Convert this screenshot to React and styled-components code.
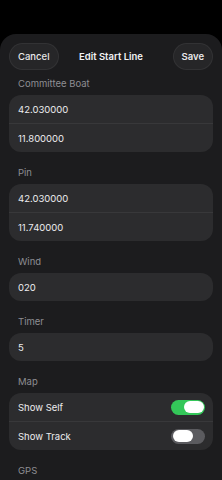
import styled, { createGlobalStyle } from "styled-components";

const Global = createGlobalStyle`
  html, body {
    margin: 0;
    padding: 0;
    background: #000;
  }
  body {
    font-family: Inter, "Noto Sans", sans-serif;
    -webkit-font-smoothing: antialiased;
  }
`;

const Screen = styled.div`
  width: 222px;
  height: 480px;
  background: #000;
  padding-top: 34px;
  box-sizing: border-box;
  overflow: hidden;
`;

const Sheet = styled.div`
  background: #1c1c1e;
  border-radius: 16px 16px 0 0;
  height: 100%;
  padding: 9px 9px 0;
  box-sizing: border-box;
`;

const Header = styled.div`
  display: flex;
  align-items: center;
  justify-content: space-between;
  height: 27px;
  position: relative;
`;

const HeaderButton = styled.button`
  height: 27px;
  padding: 0 ${(p) => p.$pad}px;
  border-radius: 14px;
  border: 1px solid rgba(255, 255, 255, 0.06);
  background: #262628;
  color: #e8e8ea;
  font-family: inherit;
  font-size: 9.5px;
  font-weight: ${(p) => (p.$bold ? 600 : 500)};
`;

const Title = styled.div`
  position: absolute;
  left: 0;
  right: 0;
  text-align: center;
  pointer-events: none;
  color: #f2f2f4;
  font-size: 9.5px;
  font-weight: 600;
`;

const Form = styled.div`
  display: flex;
  flex-direction: column;
  gap: 15px;
  padding-top: 8px;
`;

const Section = styled.div`
  display: flex;
  flex-direction: column;
`;

const Label = styled.div`
  font-size: 9.5px;
  line-height: 12px;
  color: #8e8e93;
  padding-left: 9px;
  margin-bottom: 5px;
`;

const Group = styled.div`
  background: #2c2c2e;
  border-radius: 12px;
  display: flex;
  flex-direction: column;
`;

const Row = styled.div`
  height: 28px;
  display: flex;
  align-items: center;
  justify-content: space-between;
  padding: 0 8px 0 9px;
  color: #ececee;
  font-size: 9.5px;
  & + & {
    border-top: 1px solid #38383a;
  }
`;

const Track = styled.div`
  width: 34px;
  height: 15px;
  border-radius: 8px;
  background: ${(p) => (p.$on ? "#34c759" : "#5b5b5f")};
  display: flex;
  align-items: center;
  justify-content: ${(p) => (p.$on ? "flex-end" : "flex-start")};
  padding: 0 1.5px;
  box-sizing: border-box;
`;

const Knob = styled.div`
  width: 20px;
  height: 12px;
  border-radius: 6px;
  background: #fff;
`;

function Toggle({ on }) {
  return (
    <Track $on={on}>
      <Knob />
    </Track>
  );
}

export default function App() {
  return (
    <>
      <Global />
      <Screen>
        <Sheet>
          <Header>
            <HeaderButton $pad={8}>Cancel</HeaderButton>
            <Title>Edit Start Line</Title>
            <HeaderButton $pad={8} $bold>Save</HeaderButton>
          </Header>
          <Form>
            <Section>
              <Label>Committee Boat</Label>
              <Group>
                <Row>42.030000</Row>
                <Row>11.800000</Row>
              </Group>
            </Section>
            <Section>
              <Label>Pin</Label>
              <Group>
                <Row>42.030000</Row>
                <Row>11.740000</Row>
              </Group>
            </Section>
            <Section>
              <Label>Wind</Label>
              <Group>
                <Row>020</Row>
              </Group>
            </Section>
            <Section>
              <Label>Timer</Label>
              <Group>
                <Row>5</Row>
              </Group>
            </Section>
            <Section>
              <Label>Map</Label>
              <Group>
                <Row>
                  Show Self
                  <Toggle on />
                </Row>
                <Row>
                  Show Track
                  <Toggle />
                </Row>
              </Group>
            </Section>
            <Section>
              <Label>GPS</Label>
            </Section>
          </Form>
        </Sheet>
      </Screen>
    </>
  );
}
